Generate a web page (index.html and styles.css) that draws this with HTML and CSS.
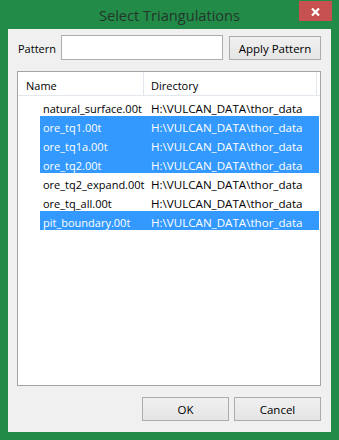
FILE: index.html
```html
<!DOCTYPE html>
<html>
<head>
<meta charset="utf-8">
<link rel="stylesheet" href="styles.css">
</head>
<body>
<div class="window">
  <div class="titlebar">
    <div class="tb-side"></div>
    <div class="title">Select Triangulations</div>
    <div class="tb-side tb-right">
      <div class="close">
        <svg width="9" height="8" viewBox="0 0 9 8"><path d="M1 0.5 L8 7.5 M8 0.5 L1 7.5" stroke="#fff" stroke-width="2.2" fill="none"/></svg>
      </div>
    </div>
  </div>
  <div class="client">
    <div class="pattern-row">
      <span class="label">Pattern</span>
      <div class="input"></div>
      <div class="btn btn-apply">Apply Pattern</div>
    </div>
    <div class="list">
      <div class="list-header">
        <div class="hcell hname">Name</div>
        <div class="hcell hdir">Directory</div>
        <div class="hcell hrest"></div>
      </div>
      <div class="rows">
        <div class="row"><span class="cname">natural_surface.00t</span><span class="cdir">H:\VULCAN_DATA\thor_data</span></div>
        <div class="row sel"><span class="cname">ore_tq1.00t</span><span class="cdir">H:\VULCAN_DATA\thor_data</span></div>
        <div class="row sel"><span class="cname">ore_tq1a.00t</span><span class="cdir">H:\VULCAN_DATA\thor_data</span></div>
        <div class="row sel"><span class="cname">ore_tq2.00t</span><span class="cdir">H:\VULCAN_DATA\thor_data</span></div>
        <div class="row"><span class="cname">ore_tq2_expand.00t</span><span class="cdir">H:\VULCAN_DATA\thor_data</span></div>
        <div class="row"><span class="cname">ore_tq_all.00t</span><span class="cdir">H:\VULCAN_DATA\thor_data</span></div>
        <div class="row sel"><span class="cname">pit_boundary.00t</span><span class="cdir">H:\VULCAN_DATA\thor_data</span></div>
      </div>
    </div>
    <div class="footer">
      <div class="btn btn-foot">OK</div>
      <div class="btn btn-foot">Cancel</div>
    </div>
  </div>
</div>
</body>
</html>
```
FILE: styles.css
```css
html, body {
  margin: 0;
  padding: 0;
  background: #218b47;
}
.window {
  width: 339px;
  height: 440px;
  box-sizing: border-box;
  background: #218b47;
  display: flex;
  flex-direction: column;
  font-family: "Open Sans", "Noto Sans", sans-serif;
  font-size: 11px;
  color: #000;
}
.titlebar {
  height: 31px;
  display: grid;
  grid-template-columns: 1fr auto 1fr;
  align-items: start;
}
.title {
  font-size: 14.6px;
  line-height: 15px;
  margin-top: 8px;
  color: #24362b;
}
.tb-right {
  display: flex;
  justify-content: flex-end;
  padding-right: 7px;
}
.close {
  width: 33px;
  height: 20px;
  margin-top: 1px;
  background: #c75050;
  display: flex;
  align-items: center;
  justify-content: center;
}
.close svg {
  display: block;
  margin-top: 2px;
}
.client {
  margin: 0 8px 8px 8px;
  flex: 1;
  background: #f0f0f0;
  display: flex;
  flex-direction: column;
  padding: 6px 10px 11px 9px;
}
.pattern-row {
  display: flex;
  align-items: center;
  height: 25px;
}
.label {
  margin-left: 1px;
  width: 43px;
  padding-top: 2px;
}
.input {
  width: 160px;
  height: 23px;
  border: 1px solid #abadb3;
  background: #fff;
}
.btn {
  box-sizing: border-box;
  border: 1px solid #acacac;
  background: linear-gradient(#f0f0f0, #e5e5e5);
  display: flex;
  align-items: center;
  justify-content: center;
  height: 24px;
  padding-top: 1px;
}
.btn-apply {
  width: 92px;
  margin-left: 6px;
  margin-top: 1px;
  font-size: 11.5px;
}
.list {
  margin-top: 11px;
  height: 313px;
  border: 1px solid #a5a5a5;
  background: #fff;
  display: flex;
  flex-direction: column;
}
.list-header {
  display: flex;
  height: 23px;
  border-bottom: 1px solid #e3e8ef;
}
.hcell {
  display: flex;
  align-items: center;
  box-sizing: border-box;
  padding-top: 3px;
}
.hname {
  width: 126px;
  padding-left: 8px;
  border-right: 1px solid #e3e8ef;
}
.hdir {
  width: 173px;
  padding-left: 7px;
  border-right: 1px solid #e3e8ef;
}
.hrest {
  flex: 1;
}
.rows {
  padding-top: 1px;
  display: flex;
  flex-direction: column;
}
.row {
  display: flex;
  height: 19px;
  align-items: center;
  margin-left: 22px;
  width: 279px;
  box-sizing: border-box;
  padding-top: 3px;
}
.row.sel {
  background: #3399ff;
  color: #fff;
}
.cname {
  width: 104px;
  padding-left: 3px;
  box-sizing: border-box;
  white-space: nowrap;
}
.cdir {
  padding-left: 7px;
  white-space: nowrap;
  font-size: 11.6px;
}
.footer {
  margin-top: 11px;
  display: flex;
  justify-content: flex-end;
  gap: 5px;
}
.btn-foot {
  width: 87px;
  font-size: 11.5px;
}
```
